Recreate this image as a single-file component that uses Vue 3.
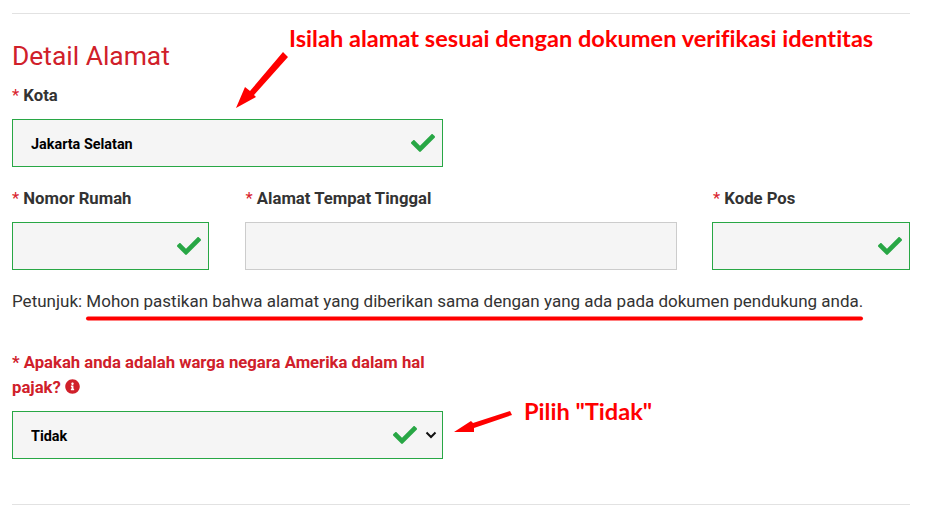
<template>
  <div class="page">
    <hr class="line" />
    <h2 class="title">Detail Alamat</h2>

    <div class="field kota">
      <label><span class="star">*</span> Kota</label>
      <div class="box ok">
        <input type="text" value="Jakarta Selatan" readonly />
        <svg class="check" viewBox="0 0 512 512"><path :d="checkPath" /></svg>
      </div>
    </div>

    <div class="row">
      <div v-for="f in fields" :key="f.name" class="field" :class="f.cls">
        <label><span class="star">*</span> {{ f.name }}</label>
        <div class="box" :class="{ ok: f.ok }">
          <input type="text" readonly />
          <svg v-if="f.ok" class="check" viewBox="0 0 512 512"><path :d="checkPath" /></svg>
        </div>
      </div>
    </div>

    <p class="hint">Petunjuk: Mohon pastikan bahwa alamat yang diberikan sama dengan yang ada pada dokumen pendukung anda.</p>

    <div class="field tax">
      <label class="red">
        * Apakah anda adalah warga negara Amerika dalam hal pajak?
        <svg class="info" viewBox="0 0 512 512"><path :d="infoPath" /></svg>
      </label>
      <div class="box ok">
        <select>
          <option>Tidak</option>
        </select>
        <svg class="check left" viewBox="0 0 512 512"><path :d="checkPath" /></svg>
        <svg class="chevron" viewBox="0 0 12 8"><path d="M1.5 1.5 6 6l4.5-4.5" /></svg>
      </div>
    </div>

    <hr class="line bottom" />

    <!-- red notes drawn over the form -->
    <div class="note note-top">Isilah alamat sesuai dengan dokumen verifikasi identitas</div>
    <div class="note note-side">Pilih "Tidak"</div>
    <svg class="marks" viewBox="0 0 932 517">
      <polygon points="236,108 245,87 250,91 283,52 288,57 254,95 256,97" />
      <polygon points="454,432 471,421 473,423 510,411 512,415 474,428 474,432" />
      <rect x="86" y="316.5" width="777" height="4" rx="2" />
    </svg>
  </div>
</template>

<script setup>
const checkPath = 'M173.898 439.404l-166.4-166.4c-9.997-9.997-9.997-26.206 0-36.204l36.203-36.204c9.997-9.998 26.207-9.998 36.204 0L192 312.69 432.095 72.596c9.997-9.997 26.207-9.997 36.204 0l36.203 36.204c9.997 9.997 9.997 26.206 0 36.204l-294.4 294.401c-9.998 9.997-26.207 9.997-36.204-.001z'
const infoPath = 'M256 8C119.043 8 8 119.083 8 256c0 136.997 111.043 248 248 248s248-111.003 248-248C504 119.083 392.957 8 256 8zm0 110c23.196 0 42 18.804 42 42s-18.804 42-42 42-42-18.804-42-42 18.804-42 42-42zm56 254c0 6.627-5.373 12-12 12h-88c-6.627 0-12-5.373-12-12v-24c0-6.627 5.373-12 12-12h12v-64h-12c-6.627 0-12-5.373-12-12v-24c0-6.627 5.373-12 12-12h64c6.627 0 12 5.373 12 12v100h12c6.627 0 12 5.373 12 12v24z'

const fields = [
  { name: 'Nomor Rumah', cls: 'small', ok: true },
  { name: 'Alamat Tempat Tinggal', cls: 'wide', ok: false },
  { name: 'Kode Pos', cls: 'last', ok: true }
]
</script>

<style scoped>
.page {
  position: relative;
  width: 932px;
  height: 517px;
  box-sizing: border-box;
  padding: 13px 22px 0 12px;
  overflow: hidden;
  background: #fff;
  font-family: Roboto, "Liberation Sans", sans-serif;
  color: #333;
}

.line {
  margin: 0;
  border: none;
  border-top: 1px solid #e2e2e2;
}

.line.bottom {
  margin-top: 45px;
}

.title {
  margin: 25px 0 10px;
  font-size: 26.4px;
  line-height: 34px;
  font-weight: 400;
  color: #d0202a;
}

.field label {
  display: block;
  font-size: 16.7px;
  line-height: 25px;
  font-weight: 700;
}

.wide label,
.last label {
  padding-left: 1px;
}

.star {
  color: #d9232e;
  font-weight: 400;
}

.kota {
  width: 431px;
}

.box {
  position: relative;
  height: 48px;
  margin-top: 11px;
  box-sizing: border-box;
  border: 1px solid #ccc;
  background: #f5f5f5;
}

.box.ok {
  border-color: #28a745;
}

.box input,
.box select {
  display: block;
  width: 100%;
  height: 100%;
  box-sizing: border-box;
  padding: 2px 18px 0;
  border: none;
  outline: none;
  appearance: none;
  background: transparent;
  font-family: inherit;
  font-size: 14.4px;
  font-weight: 700;
  color: #000;
}

.check {
  position: absolute;
  top: 11px;
  right: 7px;
  width: 24px;
  height: 24px;
  fill: #28a745;
}

.check.left {
  right: 25px;
}

.chevron {
  position: absolute;
  top: 19px;
  right: 5px;
  width: 12px;
  height: 8px;
  fill: none;
  stroke: #111;
  stroke-width: 2;
}

.row {
  display: flex;
  justify-content: space-between;
  margin-top: 19px;
}

.small {
  width: 197px;
}

.wide {
  width: 432px;
}

.last {
  width: 198px;
}

.hint {
  margin: 19px 0 0;
  font-size: 17px;
  line-height: 24px;
}

.tax {
  width: 431px;
  margin-top: 37px;
}

.red {
  color: #d0202a;
}

.info {
  width: 15px;
  height: 15px;
  vertical-align: -1px;
  fill: #d0202a;
}

.note {
  position: absolute;
  font-family: Lato, "Open Sans", sans-serif;
  font-weight: 700;
  font-variant-ligatures: none;
  color: #f00;
  white-space: nowrap;
  font-size: 23.6px;
  line-height: 30px;
}

.note-top {
  left: 289px;
  top: 23px;
}

.note-side {
  left: 524px;
  top: 396px;
}

.marks {
  position: absolute;
  top: 0;
  left: 0;
  width: 932px;
  height: 517px;
  fill: #f00;
  pointer-events: none;
}
</style>
